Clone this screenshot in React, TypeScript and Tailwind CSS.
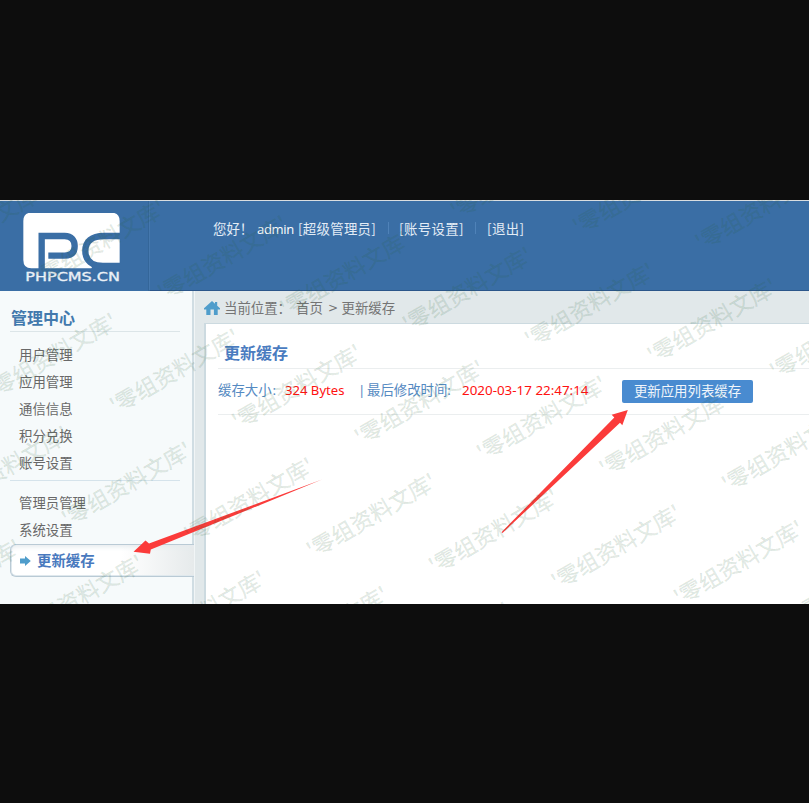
import React from "react";

const mainMenu = ["用户管理", "应用管理", "通信信息", "积分兑换", "账号设置"];
const adminMenu = ["管理员管理", "系统设置"];

// Watermark lattice: each stamp starts at origin + i * a + j * b.
const stamps: { x: number; y: number }[] = [];
for (let i = -8; i <= 8; i++) {
  for (let j = -4; j <= 4; j++) {
    const x = 551 + i * 122.4 + j * 48;
    const y = 378 + i * 15.7 - j * 113.1;
    if (x > -150 && x < 805 && y > 0 && y < 480) stamps.push({ x, y });
  }
}

function Watermark() {
  return (
    <svg className="pointer-events-none absolute inset-0" width="809" height="404" viewBox="0 0 809 404">
      {stamps.map((s, k) => (
        <text
          key={k}
          transform={`translate(${s.x + 6.5} ${s.y + 12.5}) rotate(-30)`}
          fontSize="22"
          textLength="145"
          fill="#286437"
          fillOpacity="0.13"
          stroke="#286437"
          strokeOpacity="0.07"
          strokeWidth="0.8"
        >
          '零组资料文库'
        </text>
      ))}
    </svg>
  );
}

function Arrows() {
  return (
    <svg className="pointer-events-none absolute inset-0" width="809" height="404" viewBox="0 0 809 404">
      <g fill="#fb3b3a">
        <path d="M133.5 351.7L145.5 340.5L149 343.5L322 279.6L150.8 349.6L150 353.7Z" />
        <path d="M627.8 210L611.7 214.8L614.3 217.5L501.5 332.2L502.5 333L620 222.7L622.3 225.2Z" />
      </g>
    </svg>
  );
}

function Logo() {
  return (
    <svg className="ml-[23px] mt-[12px]" width="98" height="72" viewBox="0 0 294 216">
      <path d="M25 -1H265Q290 -1 290 24V150H215L205 166H25Q1 166 1 141V24Q1 -1 25 -1Z" fill="#fff" />
      <g fill="none" stroke="#3a6ea5" strokeWidth="19">
        <path d="M56 170V69H125C146 69 155 82 155 99C155 117 146 128 125 128H76" />
        <path d="M294 69H243C205 69 187 86 187 113C187 143 207 159 240 159H294" />
      </g>
      <text x="7" y="205" fontSize="36" textLength="284" lengthAdjust="spacingAndGlyphs" fill="#eaf0f6" stroke="#eaf0f6" strokeWidth="1" className="font-['DejaVu_Sans']">
        PHPCMS.CN
      </text>
    </svg>
  );
}

function Header() {
  return (
    <header className="flex h-[91px] border-t border-[#d9dde0] bg-[#3a6ea5]">
      <div className="w-[149px] border-r border-[#346699]">
        <Logo />
      </div>
      <div className="flex-1 border-b border-l border-b-[#2b568a] border-l-[#4578ae]">
        <div className="ml-[63px] mt-[17px] flex h-5 items-center whitespace-nowrap text-[13.4px] leading-5 text-[#e3ecf6]">
          <span className="w-[44px]">您好！</span>
          <span className="w-[41px] pt-px font-['Open_Sans'] text-[13px] font-medium tracking-[-0.3px] text-white">admin</span>
          <span className="w-[90px] tracking-[0.3px]">[超级管理员]</span>
          <span className="h-3 w-[11px] border-l border-[#4f82b8]" />
          <span className="w-[76px] tracking-[0.4px]">[账号设置]</span>
          <span className="h-3 w-[12px] border-l border-[#4f82b8]" />
          <span className="tracking-[0.4px]">[退出]</span>
        </div>
      </div>
    </header>
  );
}

function MenuItem({ label }: { label: string }) {
  return <li className="h-[27px] pl-[19px] leading-[27px]">{label}</li>;
}

function Sidebar() {
  return (
    <aside className="w-[195px] shrink-0 border-r border-[#f1f5f6] bg-[#f6fafb] text-[13.4px] text-[#686868]">
      <div className="h-full border-r-2 border-[#d0dde3]">
        <h2 className="ml-[10px] h-[41px] w-[170px] border-b border-[#dce5e8] pl-px pt-[14px] text-[16px] font-bold leading-6 text-[#4279ad]">
          管理中心
        </h2>
        <ul className="pt-[9px]">
          {mainMenu.map((m) => (
            <MenuItem key={m} label={m} />
          ))}
        </ul>
        <div className="ml-[10px] mt-[4px] h-px w-[170px] bg-[#d5e3eb]" />
        <ul className="pt-[8px] pb-px">
          {adminMenu.map((m) => (
            <MenuItem key={m} label={m} />
          ))}
        </ul>
        <div className="-mr-[2px] ml-[10px] flex h-[33px] items-center rounded-l-[6px] border border-r-0 border-[#b9cad5] bg-linear-to-r from-white from-60% to-[#e6eaeb] pl-[9px] text-[14.4px] font-bold text-[#4879be] shadow-[inset_1px_0_0_#dfe8ed,inset_0_-1px_0_#dfe8ed,inset_0_5px_5px_-3px_#e6ebee]">
          <svg width="11" height="10" viewBox="0 0 11 10">
            <path d="M0 2.5H5V0L10.8 5L5 10V7.5H0Z" fill="#4f9dcb" />
          </svg>
          <span className="-mt-[2px] ml-[6px] leading-5">更新缓存</span>
        </div>
      </div>
    </aside>
  );
}

function Content() {
  return (
    <main className="flex flex-1 flex-col bg-[#e1e8ea] pl-[9px]">
      <div className="flex h-[32px] items-center whitespace-nowrap text-[13.4px] text-[#747474]">
        <svg className="mt-[2px]" width="16" height="14" viewBox="0 0 16 14">
          <path d="M8 0L11 2.7V1H13.2V4.7L16 7.3V8.4H13.7V14H9.9V8.6H6.5V14H2.3V8.4H0V7.3Z" fill="#4f9dcb" />
        </svg>
        <span className="ml-1 mt-px w-[72px]">当前位置：</span>
        <span className="mt-px w-[32px]">首页</span>
        <span className="mt-[2px] w-[13.5px] font-['DejaVu_Sans'] text-[12px]">&gt;</span>
        <span className="mt-px">更新缓存</span>
      </div>
      <div className="flex-1 border-l-2 border-t border-[#ccdae0] bg-white pl-[12px]">
        <h1 className="h-[45px] border-b border-[#ebeeef] pl-[6px] pt-[16px] text-[16px] font-bold leading-6 text-[#4a7cc0]">
          更新缓存
        </h1>
        <div className="flex h-[46px] items-center whitespace-nowrap border-b border-[#ebeeef] pb-[2px] text-[13.4px] text-[#558ac2]">
          <span className="-mt-px w-[67px]">缓存大小<span className="ml-px font-['Noto_Sans']">:</span></span>
          <span className="w-[73px] font-['Noto_Sans'] text-[13.1px] text-[#f11]">324 Bytes</span>
          <span className="w-[9px] font-['Noto_Sans']">|</span>
          <span className="-mt-px w-[95px]">最后修改时间<span className="font-['Noto_Sans']">:</span></span>
          <span className="w-[160px] font-['Noto_Sans'] text-[13.4px] text-[#f11]">2020-03-17 22:47:14</span>
          <button className="mt-px h-[23px] w-[131px] rounded-[2px] bg-[#498bd0] pb-[2px] text-center leading-[20px] text-[#f1f6fb]">
            更新应用列表缓存
          </button>
        </div>
      </div>
    </main>
  );
}

export default function App() {
  return (
    <div className="h-[803px] w-[809px] overflow-hidden bg-[#0d0d0d] pt-[200px] font-['Noto_Sans_CJK_SC',sans-serif]">
      <div className="relative flex h-[404px] flex-col overflow-hidden">
        <Header />
        <div className="flex flex-1">
          <Sidebar />
          <Content />
        </div>
        <Arrows />
        <Watermark />
      </div>
    </div>
  );
}
